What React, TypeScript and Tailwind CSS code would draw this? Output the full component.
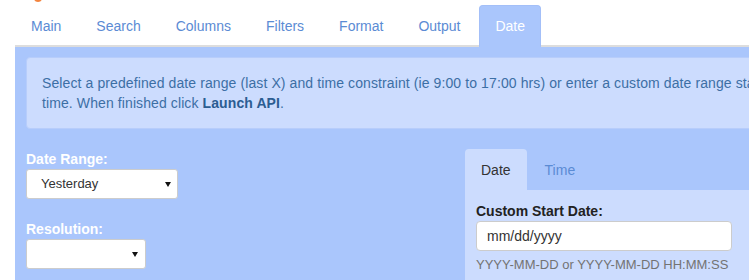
import React from "react";

function Arrow() {
  return (
    <svg width="6" height="5" viewBox="0 0 6 5" className="block">
      <polygon points="0,0 6,0 3,5" fill="#111" />
    </svg>
  );
}

export default function App() {
  const tabs = ["Main", "Search", "Columns", "Filters", "Format", "Output", "Date"];
  return (
    <div className="relative w-[749px] h-[280px] overflow-hidden bg-white font-['Liberation_Sans',Arial,sans-serif] text-[14px]">
      <div className="absolute left-[34px] top-[-6px] w-[8px] h-[8px] rounded-full bg-[#f3843e]" />
      <div className="w-[1100px] pl-[15px] pt-[5px]">
        <div className="flex border-b-2 border-[#dddddd]">
          {tabs.map((t) =>
            t === "Date" ? (
              <div
                key={t}
                className="-mb-[2px] mr-[3px] rounded-t-[4px] border border-[#a3bff8] border-b-[#aac6fc] bg-[#aac6fc] px-[15px] py-[10px] leading-[20px] text-white"
              >
                {t}
              </div>
            ) : (
              <div
                key={t}
                className="-mb-[2px] mr-[3px] rounded-t-[4px] border border-transparent px-[15px] py-[10px] leading-[20px] text-[#5b8bd4]"
              >
                {t}
              </div>
            )
          )}
        </div>
        <div className="bg-[#aac6fc] px-[11px] pt-[10px] pb-[20px]">
          <div className="mb-[20px] rounded-[4px] border border-[#b7cdfb] bg-[#ccdcfe] p-[15px] leading-[20px] tracking-[0.1px] text-[#3c6fa5]">
            <div className="whitespace-nowrap">
              Select a predefined date range (last X) and time constraint (ie 9:00 to 17:00 hrs) or enter a custom date range start and end date /
            </div>
            <div className="whitespace-nowrap">
              time. When finished click <b className="text-[#2b5d92]">Launch API</b>.
            </div>
          </div>
          <div className="flex">
            <div className="w-[439px] shrink-0">
              <div className="font-bold leading-[20px] text-white">Date Range:</div>
              <div className="flex h-[30px] w-[152px] items-center justify-between rounded-[3px] border border-[#cccccc] bg-white pl-[14px] pr-[6px] text-[13px] text-[#333]">
                <span>Yesterday</span>
                <Arrow />
              </div>
              <div className="mt-[20px] font-bold leading-[20px] text-white">Resolution:</div>
              <div className="flex h-[30px] w-[120px] items-center justify-end rounded-[3px] border border-[#cccccc] bg-white pr-[7px]">
                <Arrow />
              </div>
            </div>
            <div className="w-[600px] shrink-0">
              <div className="flex">
                <div className="mr-[2px] rounded-t-[4px] bg-[#ccdcfe] px-[16px] pt-[11px] pb-[10px] leading-[20px] text-[#333]">
                  Date
                </div>
                <div className="px-[16px] pt-[11px] pb-[10px] leading-[20px] text-[#5b8bd4]">Time</div>
              </div>
              <div className="bg-[#ccdcfe] px-[11px] pt-[11px] pb-[20px]">
                <div className="font-bold leading-[20px] text-[#222]">Custom Start Date:</div>
                <div className="flex h-[30px] w-[256px] items-center rounded-[4px] border border-[#cccccc] bg-white pl-[10px] text-[14px] text-[#333]">
                  mm/dd/yyyy
                </div>
                <div className="mt-[5px] text-[13px] leading-[18px] text-[#737373]">
                  YYYY-MM-DD or YYYY-MM-DD HH:MM:SS
                </div>
              </div>
            </div>
          </div>
        </div>
      </div>
    </div>
  );
}
